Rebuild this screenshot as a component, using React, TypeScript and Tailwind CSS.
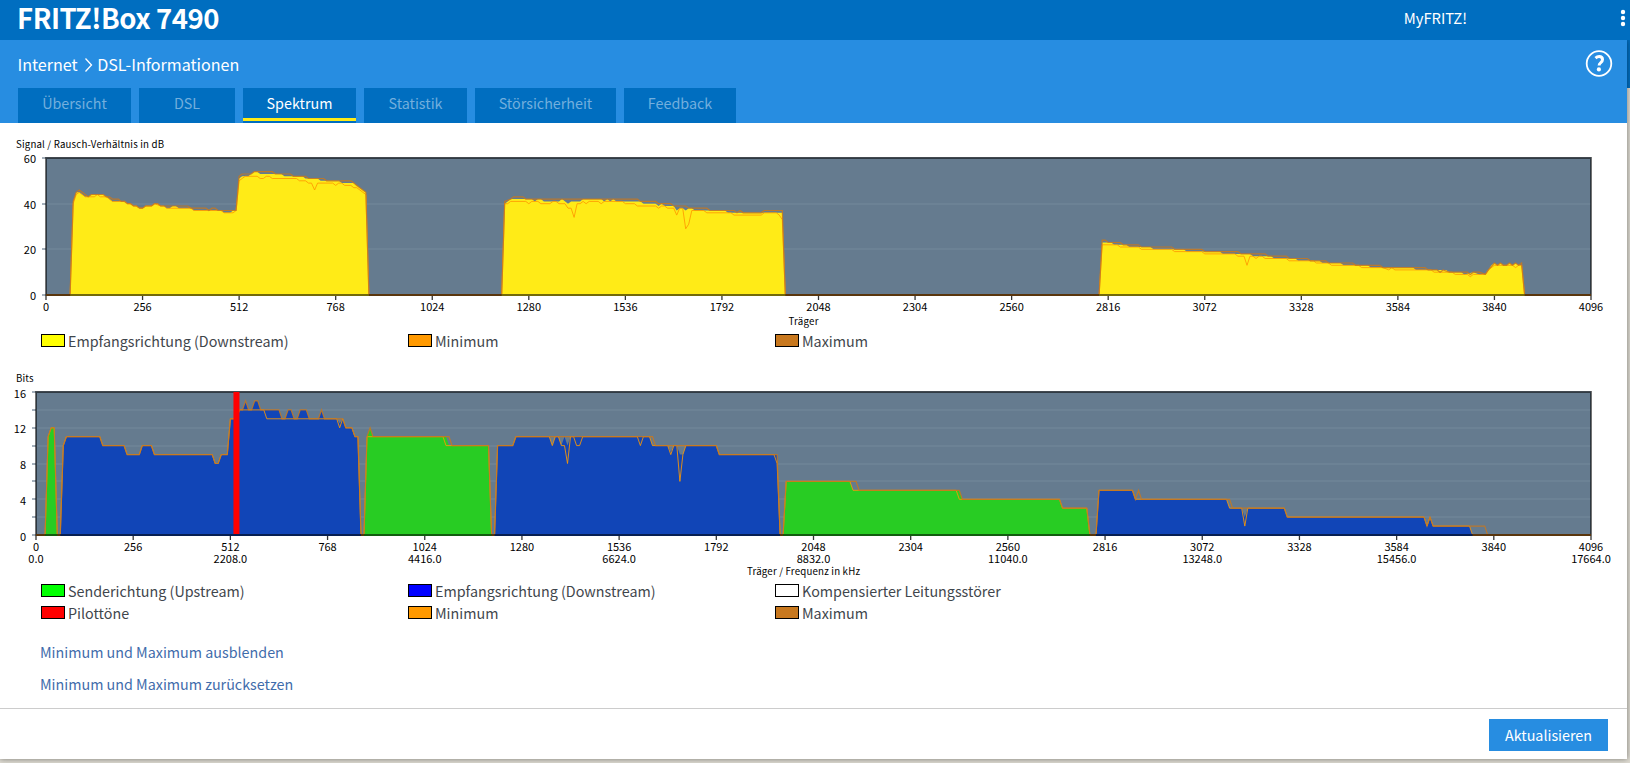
import { Fragment } from "react";

type Point = [number, number];

type Band = {
  color: string;
  fill: Point[];
  min: Point[];
  max: Point[];
};

type ChartProps = {
  title: string;
  axisTitle: string;
  height: number;
  left: number;
  top: number;
  bottom: number;
  maxValue: number;
  gridStep: number;
  labelStep: number;
  bands: Band[];
  showFrequency?: boolean;
  pilot?: number;
};

// every point is [group of 8 carriers, value]
const snrBands: Band[] = [
  {
    color: "#ffeb17",
    fill: [[8, 0], [9, 41], [10, 45], [11, 45], [12, 44], [13, 43], [14, 43], [15, 44], [19, 44], [20, 43], [21, 42], [22, 41], [26, 41], [27, 40], [28, 40], [29, 39], [30, 39], [31, 38], [32, 38], [33, 39], [35, 39], [36, 40], [37, 40], [38, 39], [39, 39], [40, 38], [41, 38], [42, 39], [43, 39], [44, 38], [48, 38], [49, 37], [58, 37], [59, 36], [61, 36], [62, 37], [63, 37], [64, 51], [65, 52], [67, 52], [68, 53], [69, 54], [70, 54], [71, 53], [78, 53], [79, 52], [85, 52], [86, 51], [90, 51], [91, 50], [97, 50], [98, 49], [102, 49], [103, 48], [104, 47], [105, 46], [106, 45], [107, 0]],
    min: [[8, 0], [9, 40], [10, 44], [11, 45], [12, 44], [13, 43], [16, 43], [17, 44], [18, 43], [20, 43], [22, 41], [26, 41], [27, 40], [28, 40], [29, 39], [30, 39], [31, 38], [32, 38], [33, 39], [35, 39], [36, 40], [38, 39], [39, 39], [40, 38], [48, 38], [49, 37], [58, 37], [59, 36], [62, 36], [63, 37], [64, 50], [65, 51], [66, 52], [70, 52], [71, 51], [72, 51], [73, 52], [74, 52], [75, 51], [83, 51], [84, 50], [86, 50], [87, 49], [88, 49], [89, 46], [90, 49], [95, 49], [96, 48], [97, 49], [98, 49], [99, 48], [101, 48], [102, 47], [103, 47], [105, 45], [106, 44], [107, 0]],
    max: [[8, 0], [9, 41], [10, 45], [11, 46], [12, 45], [13, 44], [14, 43], [15, 44], [19, 44], [20, 43], [21, 43], [22, 42], [24, 42], [25, 41], [26, 41], [27, 40], [28, 40], [29, 39], [30, 39], [31, 38], [32, 38], [33, 39], [35, 39], [36, 40], [37, 40], [38, 39], [47, 39], [48, 38], [53, 38], [54, 37], [55, 38], [56, 38], [57, 37], [63, 37], [64, 52], [65, 53], [68, 53], [69, 54], [75, 54], [76, 53], [81, 53], [82, 52], [86, 52], [87, 51], [92, 51], [93, 50], [101, 50], [102, 49], [103, 48], [104, 47], [106, 45], [107, 0]],
  },
  {
    color: "#ffeb17",
    fill: [[151, 0], [152, 40], [153, 41], [154, 42], [161, 42], [162, 41], [163, 42], [164, 42], [165, 41], [170, 41], [171, 42], [173, 40], [174, 41], [177, 41], [178, 42], [184, 42], [185, 41], [186, 42], [187, 41], [188, 42], [189, 41], [197, 41], [198, 40], [202, 40], [203, 39], [204, 40], [205, 39], [208, 39], [209, 37], [210, 38], [211, 38], [212, 37], [213, 38], [214, 38], [215, 37], [225, 37], [226, 36], [244, 36], [245, 0]],
    min: [[151, 0], [152, 40], [153, 40], [154, 41], [159, 41], [160, 40], [161, 41], [163, 41], [164, 40], [167, 40], [168, 41], [169, 41], [170, 40], [172, 40], [173, 38], [174, 38], [175, 34], [176, 40], [177, 40], [178, 41], [179, 40], [180, 41], [183, 41], [184, 40], [185, 41], [191, 41], [192, 40], [195, 40], [196, 39], [202, 39], [203, 38], [204, 39], [205, 39], [206, 38], [208, 38], [209, 35], [210, 38], [211, 38], [212, 29], [213, 31], [214, 37], [218, 37], [219, 36], [227, 36], [228, 35], [237, 35], [238, 36], [242, 36], [243, 35], [244, 33], [245, 0]],
    max: [[151, 0], [152, 41], [154, 42], [155, 43], [158, 43], [159, 42], [196, 42], [197, 41], [202, 41], [203, 40], [207, 40], [208, 39], [212, 39], [213, 38], [219, 38], [220, 37], [228, 37], [229, 36], [230, 37], [231, 36], [237, 36], [238, 37], [244, 37], [245, 0]],
  },
  {
    color: "#ffeb17",
    fill: [[349, 0], [350, 23], [353, 23], [354, 22], [358, 22], [359, 21], [366, 21], [367, 20], [377, 20], [378, 19], [389, 19], [390, 18], [399, 18], [400, 17], [406, 17], [407, 16], [414, 16], [415, 15], [422, 15], [423, 14], [429, 14], [430, 13], [438, 13], [439, 12], [453, 12], [454, 11], [464, 11], [465, 10], [469, 10], [470, 9], [473, 10], [475, 9], [477, 9], [478, 11], [479, 13], [480, 14], [481, 13], [482, 14], [483, 13], [484, 13], [485, 14], [486, 13], [487, 14], [488, 13], [489, 13], [490, 0]],
    min: [[349, 0], [350, 22], [355, 22], [356, 21], [362, 21], [363, 20], [373, 20], [374, 19], [383, 19], [384, 18], [394, 18], [395, 17], [397, 17], [398, 13], [399, 17], [400, 17], [401, 16], [402, 17], [403, 17], [404, 16], [411, 16], [412, 15], [420, 15], [421, 14], [425, 14], [426, 13], [435, 13], [436, 12], [443, 12], [445, 11], [446, 12], [447, 11], [459, 11], [460, 10], [466, 10], [467, 9], [471, 9], [472, 8], [473, 9], [477, 9], [478, 11], [480, 13], [486, 13], [487, 12], [488, 13], [489, 13], [490, 0]],
    max: [[349, 0], [350, 24], [351, 24], [352, 23], [356, 23], [357, 22], [362, 22], [363, 21], [373, 21], [374, 20], [383, 20], [384, 19], [395, 19], [396, 18], [404, 18], [405, 17], [411, 17], [412, 16], [418, 16], [419, 15], [424, 15], [425, 14], [433, 14], [434, 13], [442, 13], [443, 12], [457, 12], [458, 11], [461, 11], [462, 10], [463, 11], [465, 10], [471, 10], [472, 9], [473, 10], [475, 10], [477, 9], [478, 11], [480, 14], [481, 13], [482, 14], [483, 13], [484, 13], [485, 14], [486, 13], [487, 14], [488, 13], [489, 14], [490, 0]],
  },
];

const GREEN = "#28cc23";
const BLUE = "#1145b7";

const simpleBand = (color: string, points: Point[]): Band => ({
  color,
  fill: points,
  min: points,
  max: points,
});

const downstreamHead: Point[] = [[8, 0], [9, 10], [10, 11], [21, 11], [22, 10], [29, 10], [30, 9], [34, 9], [35, 10], [38, 10], [39, 9], [58, 9], [59, 8], [60, 8], [61, 9], [63, 9], [64, 13], [66, 13], [67, 14]];
const downstreamPeaks: Point[] = [[68, 14], [69, 15], [70, 14], [71, 14], [72, 15], [73, 15], [74, 14], [80, 14], [81, 13], [82, 13], [83, 14], [84, 14], [85, 13], [86, 13], [87, 14], [89, 14], [90, 13], [93, 13], [94, 14], [95, 13]];
const downstreamTail: Point[] = [[102, 12], [104, 12], [105, 11], [106, 11], [107, 0]];

const bitBands: Band[] = [
  simpleBand(GREEN, [[3, 0], [4, 11], [5, 12], [6, 12], [7, 0]]),
  {
    color: BLUE,
    fill: [...downstreamHead, ...downstreamPeaks, [99, 13], [100, 12.5], [101, 13], ...downstreamTail],
    min: [...downstreamHead, [75, 14], [76, 13], [99, 13], [100, 12], [101, 13], ...downstreamTail],
    max: [...downstreamHead, ...downstreamPeaks, [101, 13], ...downstreamTail],
  },
  {
    color: GREEN,
    fill: [[108, 0], [109, 11], [110, 12], [111, 11], [135, 11], [136, 10], [149, 10], [150, 0]],
    min: [[108, 0], [109, 11], [134, 11], [135, 10], [149, 10], [150, 0]],
    max: [[108, 0], [109, 11], [110, 12], [111, 11], [136, 11], [137, 10], [149, 10], [150, 0]],
  },
  {
    color: BLUE,
    fill: [[151, 0], [152, 10], [157, 10], [158, 11], [169, 11], [170, 10], [171, 11], [172, 11], [173, 10], [174, 11], [175, 10], [176, 11], [202, 11], [203, 10], [208, 10], [209, 9.3], [210, 10], [211, 10], [212, 9], [213, 9], [214, 10], [224, 10], [225, 9], [244, 9], [245, 0]],
    min: [[151, 0], [152, 10], [157, 10], [158, 11], [169, 11], [170, 10], [171, 11], [172, 11], [173, 10], [174, 10], [175, 8], [176, 11], [177, 11], [178, 10], [179, 10], [180, 11], [198, 11], [199, 10], [200, 11], [202, 11], [203, 10], [208, 10], [209, 9], [210, 10], [211, 10], [212, 6], [213, 9], [214, 10], [224, 10], [225, 9], [243, 9], [244, 8], [245, 0]],
    max: [[151, 0], [152, 10], [157, 10], [158, 11], [203, 11], [204, 10], [224, 10], [225, 9], [244, 9], [245, 0]],
  },
  {
    color: GREEN,
    fill: [[246, 0], [247, 6], [268, 6], [269, 5], [304, 5], [305, 4], [337, 4], [338, 3], [346, 3], [347, 0]],
    min: [[246, 0], [247, 6], [268, 6], [269, 5], [303, 5], [304, 4], [337, 4], [338, 3], [346, 3], [347, 0]],
    max: [[246, 0], [247, 6], [270, 6], [271, 5], [304, 5], [305, 4], [337, 4], [338, 3], [346, 3], [347, 0]],
  },
  {
    color: BLUE,
    fill: [[349, 0], [350, 5], [361, 5], [362, 4], [392, 4], [393, 3], [397, 3], [398, 2], [399, 3], [411, 3], [412, 2], [457, 2], [458, 1], [459, 2], [460, 1], [472, 1], [473, 0]],
    min: [[349, 0], [350, 5], [361, 5], [362, 4], [392, 4], [393, 3], [397, 3], [398, 1], [399, 3], [411, 3], [412, 2], [457, 2], [458, 1], [459, 2], [460, 1], [472, 1], [473, 0]],
    max: [[349, 0], [350, 5], [361, 5], [362, 4], [363, 5], [364, 4], [393, 4], [394, 3], [411, 3], [412, 2], [457, 2], [458, 1], [459, 2], [460, 1], [477, 1], [478, 0]],
  },
];

const RIGHT = 1591;

const Chart = ({
  title,
  axisTitle,
  height,
  left,
  top,
  bottom,
  maxValue,
  gridStep,
  labelStep,
  bands,
  showFrequency,
  pilot,
}: ChartProps) => {
  const x = (bin: number) => left + (bin * (RIGHT - left)) / 512;
  const y = (value: number) => bottom - (value * (bottom - top)) / maxValue;
  const path = (points: Point[]) =>
    points.map(([bin, value]) => `${x(bin).toFixed(1)},${y(value).toFixed(1)}`).join(" ");
  const line = (key: "min" | "max") =>
    path([[0, 0], ...bands.flatMap((band) => band[key]), [512, 0]]);

  const grid = Array.from({ length: maxValue / gridStep + 1 }, (_, i) => i * gridStep);
  const ticks = Array.from({ length: 17 }, (_, i) => i);

  return (
    <svg width="1627" height={height} className="block" fontSize="11" fill="#000">
      <text x="16" y={top - 10.5} fontSize="9.7" textLength={title === "Bits" ? 17.5 : 148}>
        {title}
      </text>
      <rect x={left} y={top} width={RIGHT - left} height={bottom - top} fill="#657b8f" />

      {grid.map((value) => (
        <Fragment key={value}>
          <path
            d={`M${left} ${Math.round(y(value))}H${RIGHT}`}
            stroke="#6f8497"
            strokeWidth="1.4"
          />
          <path
            d={`M${left - 4} ${Math.round(y(value))}H${left}`}
            stroke="#a5b0bb"
            strokeWidth="2"
          />
          {value % labelStep === 0 && (
            <text x={left - 10} y={y(value) + (showFrequency ? 5.5 : 4.9)} textAnchor="end">
              {value}
            </text>
          )}
        </Fragment>
      ))}

      {bands.map((band, i) => (
        <polygon key={i} points={path(band.fill)} fill={band.color} />
      ))}
      <polyline points={line("min")} fill="none" stroke="#ff9900" strokeOpacity="0.85" />
      <polyline points={line("max")} fill="none" stroke="#c8781e" strokeOpacity="0.85" strokeWidth="1.2" />
      <path d={`M${left} ${bottom}H${RIGHT}`} stroke="#c8781e" strokeWidth="2" />
      {bands.map((band, i) => (
        <path
          key={i}
          d={`M${x(band.fill[0][0])} ${bottom}H${x(band.fill[band.fill.length - 1][0])}`}
          stroke={band.color}
          strokeWidth="2"
        />
      ))}

      <rect
        x={left}
        y={top}
        width={RIGHT - left}
        height={bottom - top}
        fill="none"
        stroke="#000"
        strokeOpacity="0.55"
        strokeWidth="2"
      />
      {pilot && <rect x={x(pilot) - 3} y={top} width="6" height={bottom - top - 1} fill="#f00" />}

      {ticks.map((i) => (
        <Fragment key={i}>
          <path d={`M${x(i * 32)} ${bottom + 1}v4`} stroke="#000" strokeOpacity="0.8" strokeWidth="1.3" />
          <text x={x(i * 32)} y={bottom + 16} textAnchor="middle">
            {i * 256}
          </text>
          {showFrequency && i % 2 === 0 && (
            <text x={x(i * 32)} y={bottom + 28} textAnchor="middle">
              {(i * 1104).toFixed(1)}
            </text>
          )}
        </Fragment>
      ))}
      <text
        x="803.5"
        y={bottom + (showFrequency ? 40 : 30)}
        fontSize="9.7"
        textAnchor="middle"
        textLength={showFrequency ? 113 : 30}
      >
        {axisTitle}
      </text>
    </svg>
  );
};

const tabs = [
  { label: "Übersicht", width: "w-[113px]" },
  { label: "DSL", width: "w-24" },
  { label: "Spektrum", width: "w-[113px]", active: true },
  { label: "Statistik", width: "w-[103px]" },
  { label: "Störsicherheit", width: "w-[141px]" },
  { label: "Feedback", width: "w-28" },
];

const LegendItem = ({ color, label }: { color: string; label: string }) => (
  <div className="flex h-[22px] items-center gap-[3px]">
    <span className={`-mt-px h-[13px] w-6 border border-black ${color}`} />
    <span className="whitespace-nowrap leading-[22px]">{label}</span>
  </div>
);

const App = () => {
  return (
    <div className="flex h-[763px] w-[1630px] flex-col overflow-hidden bg-[#dedbd2] font-['Noto_Sans_CJK_SC','Noto_Sans',sans-serif] text-[14.32px] text-[#3f464c]">
      {/* HEADER */}
      <header className="relative z-10 flex h-10 shrink-0 items-start justify-between bg-[#006ec0] pl-[17px] text-white">
        <h1 className="whitespace-nowrap text-[27.5px] font-bold leading-[34px] tracking-[-0.45px]">
          FRITZ!Box 7490
        </h1>
        <div className="flex h-9 items-center">
          <span className="mr-[153px] text-[14.8px] leading-9">MyFRITZ!</span>
          <svg width="10" height="36" className="block" fill="#fff">
            <circle cx="3" cy="12" r="2.2" />
            <circle cx="3" cy="18" r="2.2" />
            <circle cx="3" cy="24" r="2.2" />
          </svg>
        </div>
      </header>

      <div className="flex h-[723px] shrink-0 bg-linear-to-b from-[#006ec0] from-[48px] to-[#dedbd2] to-[48px]">
        <div className="flex h-[719px] w-[1627px] shrink-0 flex-col bg-white shadow-[0_0_6px_rgba(0,0,0,0.45)]">
          {/* BREADCRUMB + TABS */}
          <div className="flex h-[83px] shrink-0 flex-col justify-between bg-[#278de1] pl-[17.5px]">
            <div className="flex h-12 items-center justify-between pr-3.5 text-white">
              <div className="flex items-center text-[16.1px] leading-6">
                <span>Internet</span>
                <svg width="19.5" height="16" className="mt-0.5 block" fill="none" stroke="#fff" strokeWidth="1.3">
                  <path d="M7.5 1.5l6 6.5-6 6.5" />
                </svg>
                <span>DSL-Informationen</span>
              </div>
              <svg width="28" height="28" className="block">
                <circle cx="14" cy="13.5" r="12.3" fill="none" stroke="#fff" strokeWidth="1.8" />
                <path d="M10.5 8.2q1.7-1.6 3.7-1.6 3.3 0 3.3 3 0 1.7-1.7 3-1.7 1.3-1.7 2.9" fill="none" stroke="#fff" strokeWidth="3" />
                <circle cx="13.9" cy="19.4" r="2.1" fill="#fff" />
              </svg>
            </div>
            <nav className="flex h-[35px] gap-2 pl-[0.5px]">
              {tabs.map((tab) => (
                <button
                  key={tab.label}
                  className={`flex h-[35px] flex-col items-center bg-[#006ec0] ${tab.width} ${
                    tab.active ? "text-white" : "text-[#73afdd]"
                  }`}
                >
                  <span className="h-[30px] leading-[29px]">{tab.label}</span>
                  {tab.active && <span className="h-[3px] w-full bg-[#ffeb17]" />}
                </button>
              ))}
            </nav>
          </div>

          {/* SNR */}
          <Chart
            title="Signal / Rausch-Verhältnis in dB"
            axisTitle="Träger"
            height={207}
            left={46}
            top={35}
            bottom={172}
            maxValue={60}
            gridStep={20}
            labelStep={20}
            bands={snrBands}
          />
          <div className="grid grid-cols-[367px_367px_367px] pl-[41px]">
            <LegendItem color="bg-[#ffff00]" label="Empfangsrichtung (Downstream)" />
            <LegendItem color="bg-[#ff9900]" label="Minimum" />
            <LegendItem color="bg-[#c8781e]" label="Maximum" />
          </div>

          {/* BITS */}
          <Chart
            title="Bits"
            axisTitle="Träger / Frequenz in kHz"
            height={228}
            left={36}
            top={40}
            bottom={183}
            maxValue={16}
            gridStep={2}
            labelStep={4}
            bands={bitBands}
            pilot={66}
            showFrequency
          />
          <div className="grid grid-cols-[367px_367px_367px] pl-[41px]">
            <LegendItem color="bg-[#00ff00]" label="Senderichtung (Upstream)" />
            <LegendItem color="bg-[#0000ff]" label="Empfangsrichtung (Downstream)" />
            <LegendItem color="bg-white" label="Kompensierter Leitungsstörer" />
            <LegendItem color="bg-[#ff0000]" label="Pilottöne" />
            <LegendItem color="bg-[#ff9900]" label="Minimum" />
            <LegendItem color="bg-[#c8781e]" label="Maximum" />
          </div>

          <div className="flex flex-col items-start pl-10 pt-3 leading-8 text-[#3f6cab]">
            <a href="#hide">Minimum und Maximum ausblenden</a>
            <a href="#reset">Minimum und Maximum zurücksetzen</a>
          </div>

          {/* FOOTER */}
          <footer className="mt-auto flex h-[51px] shrink-0 items-start justify-end border-t border-[#cccccc] pr-[19px] pt-2.5">
            <button className="h-8 w-[119px] bg-[#278de1] leading-8 text-white">Aktualisieren</button>
          </footer>
        </div>
      </div>
    </div>
  );
};

export default App;
